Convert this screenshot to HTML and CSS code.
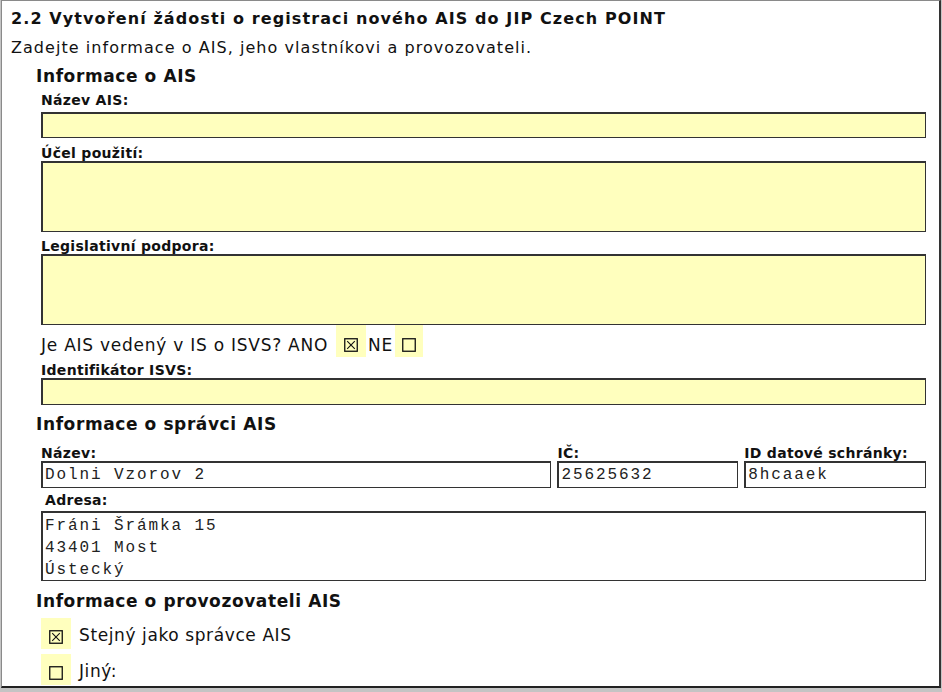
FILE: index.html
```html
<!DOCTYPE html>
<html>
  <head>
    <title>Žádost o registraci AIS</title>
    <link rel="stylesheet" href="styles.css">
  </head>
  <body>
    <div class="page">
      <h2 class="title">2.2 Vytvoření žádosti o registraci nového AIS do JIP Czech POINT</h2>
      <p class="intro">Zadejte informace o AIS, jeho vlastníkovi a provozovateli.</p>

      <div class="group group-ais">
        <h3 class="group-title">Informace o AIS</h3>
        <div class="lbl first">Název AIS:</div>
        <div class="field fill single"></div>
        <div class="lbl">Účel použití:</div>
        <div class="field fill multi"></div>
        <div class="lbl tight">Legislativní podpora:</div>
        <div class="field fill multi"></div>

        <div class="question">
          <span class="q-text">Je AIS vedený v IS o ISVS? ANO</span>
          <span class="mark">
            <svg width="14" height="14" viewBox="0 0 14 14"><rect x="0.75" y="0.75" width="12.5" height="12.5" fill="none" stroke="#111" stroke-width="1.3"/><path d="M3.2 3.2L10.8 10.8M10.8 3.2L3.2 10.8" stroke="#111" stroke-width="1.1"/></svg>
          </span>
          <span class="q-text">NE</span>
          <span class="mark narrow">
            <svg width="14" height="14" viewBox="0 0 14 14"><rect x="0.75" y="0.75" width="12.5" height="12.5" fill="none" stroke="#111" stroke-width="1.3"/></svg>
          </span>
        </div>
        <div class="lbl after-question">Identifikátor ISVS:</div>
        <div class="field fill single tall"></div>
      </div>

      <div class="group group-owner">
        <h3 class="group-title">Informace o správci AIS</h3>
        <div class="row">
          <div class="col col-name">
            <div class="lbl">Název:</div>
            <div class="field single tall mono">Dolni Vzorov 2</div>
          </div>
          <div class="col col-ic">
            <div class="lbl">IČ:</div>
            <div class="field single tall mono">25625632</div>
          </div>
          <div class="col col-id">
            <div class="lbl">ID datové schránky:</div>
            <div class="field single tall mono">8hcaaek</div>
          </div>
        </div>
        <div class="lbl indent">Adresa:</div>
        <div class="field address mono">Fráni Šrámka 15<br>43401 Most<br>Ústecký</div>
      </div>

      <div class="group group-operator">
        <h3 class="group-title">Informace o provozovateli AIS</h3>
        <div class="option">
          <span class="mark">
            <svg width="14" height="14" viewBox="0 0 14 14"><rect x="0.75" y="0.75" width="12.5" height="12.5" fill="none" stroke="#111" stroke-width="1.3"/><path d="M3.2 3.2L10.8 10.8M10.8 3.2L3.2 10.8" stroke="#111" stroke-width="1.1"/></svg>
          </span>
          <span>Stejný jako správce AIS</span>
        </div>
        <div class="option">
          <span class="mark">
            <svg width="14" height="14" viewBox="0 0 14 14"><rect x="0.75" y="0.75" width="12.5" height="12.5" fill="none" stroke="#111" stroke-width="1.3"/></svg>
          </span>
          <span>Jiný:</span>
        </div>
      </div>
    </div>
  </body>
</html>
```

FILE: styles.css
```css
html, body {
  margin: 0;
  height: 100%;
  background-color: #c4c4c4;
}

body {
  font-family: "DejaVu Sans", Verdana, sans-serif;
  color: #111;
  overflow: hidden;
}

.page {
  box-sizing: border-box;
  width: 940px;
  height: 688px;
  margin-left: 1px;
  padding: 8px 13px 0 9px;
  background-color: #fff;
  border-top: 1px solid #8a8a8a;
  border-left: 1px solid #8a8a8a;
  border-right: 2px solid #333;
  border-bottom: 2px solid #222;
}

.title {
  margin: 0;
  font-size: 16px;
  letter-spacing: 1.1px;
  line-height: 20px;
  font-weight: bold;
}

.intro {
  margin: 9px 0 0 0;
  font-size: 16px;
  letter-spacing: 1.05px;
  line-height: 20px;
}

.group {
  padding-left: 30px;
}

.group-title {
  margin: 8px 0 0 -5px;
  font-size: 17px;
  letter-spacing: 0.6px;
  line-height: 20px;
  font-weight: bold;
}

.group-owner .group-title {
  margin-top: 9px;
}

.group-operator .group-title {
  margin-top: 10px;
}

.lbl {
  font-size: 14px;
  font-weight: bold;
  letter-spacing: 0.3px;
  line-height: 16px;
  margin-top: 7px;
}

.lbl.first {
  margin-top: 6px;
  margin-bottom: 4px;
}

.lbl.tight {
  margin-top: 6px;
}

.lbl.after-question {
  margin-top: 5px;
}

.row .lbl {
  margin-top: 11px;
}

.lbl.indent {
  padding-left: 4px;
  margin-top: 4px;
  margin-bottom: 3px;
}

.field {
  box-sizing: border-box;
  border: 1px solid #333;
  border-top-width: 2px;
  border-left-width: 2px;
  background-color: #fff;
}

.field.fill {
  background-color: #ffffbe;
}

.single {
  height: 26px;
}

.single.tall {
  height: 27px;
}

.multi {
  height: 71px;
}

.mono {
  font-family: "Liberation Mono", "Courier New", monospace;
  font-size: 16px;
  letter-spacing: 1.9px;
  color: #222;
  padding: 0 0 0 2px;
  line-height: 24px;
}

.address {
  height: 70px;
  line-height: 22px;
  padding-top: 2px;
}

.question {
  display: flex;
  align-items: flex-end;
  font-size: 17px;
  letter-spacing: 0.75px;
  height: 32px;
}

.q-text {
  line-height: 20px;
  padding-bottom: 2px;
}

.question .mark {
  margin-left: 8px;
  margin-right: 2px;
}

.question .mark.narrow {
  width: 28px;
  margin-left: 2px;
}

.mark {
  display: inline-flex;
  align-items: flex-end;
  justify-content: center;
  box-sizing: border-box;
  width: 30px;
  height: 32px;
  padding-bottom: 5px;
  background-color: #ffffbe;
}

.row {
  display: flex;
  gap: 6px;
}

.col-name {
  width: 511px;
}

.col-ic {
  width: 181px;
}

.col-id {
  width: 182px;
}

.option {
  display: flex;
  align-items: flex-end;
  gap: 8px;
  font-size: 17px;
  letter-spacing: 0.6px;
  margin-top: 5px;
}

.option:first-of-type {
  margin-top: 7px;
}

.option .mark {
  height: 31px;
}

.option span:last-child {
  line-height: 20px;
  padding-bottom: 4px;
}
```
